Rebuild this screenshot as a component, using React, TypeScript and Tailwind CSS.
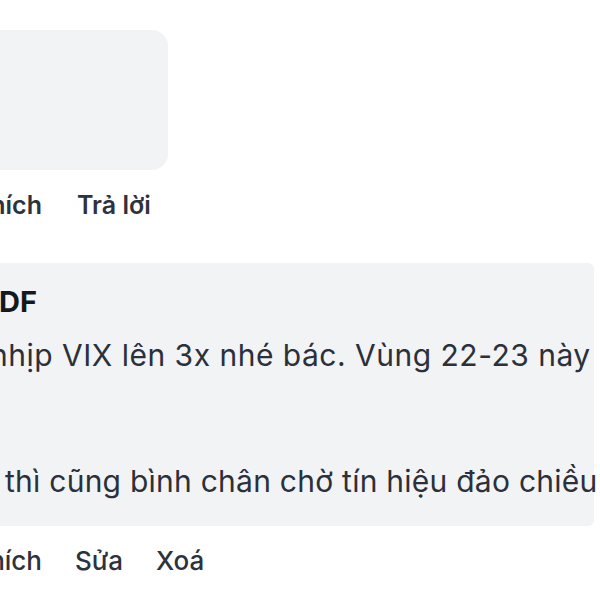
import type { ReactNode } from "react";

// Edge-clipped slot: the text is pushed against the right side so anything
// longer than the slot runs off the left of the viewport.
function Clip({ width, children }: { width: string; children: ReactNode }) {
  return (
    <span className={`flex shrink-0 justify-end whitespace-nowrap ${width}`}>
      {children}
    </span>
  );
}

export default function App() {
  return (
    <div
      className="w-[600px] h-[600px] overflow-hidden bg-white text-[#2b303a]"
      style={{ fontFamily: "Inter, 'Noto Sans', sans-serif" }}
    >
      {/* Parent comment bubble (attachment area) */}
      <div className="-ml-[40px] mt-[30px] h-[140px] w-[208px] rounded-2xl bg-[#f2f3f5]" />

      {/* Actions for the parent comment */}
      <div className="mt-[19px] flex items-center gap-[35px] text-[25px] leading-[32px] font-semibold text-[#2d323c]">
        <Clip width="w-[42px]">Thích</Clip>
        <span className="whitespace-nowrap">Trả lời</span>
      </div>

      {/* Reply bubble */}
      <div className="-ml-[40px] mt-[42px] w-[634px] rounded-md bg-[#f2f3f5] pl-[40px] pt-[21px] pb-[24px]">
        <div className="flex text-[29px] leading-[36px] font-bold text-[#15181e]">
          <Clip width="w-[37px]">DF</Clip>
        </div>
        <div className="mt-[14px] text-[30px] leading-[42px] tracking-[0.25px] whitespace-nowrap">
          <div className="-ml-[10px] tracking-[0.5px]">nhịp VIX lên 3x nhé bác. Vùng 22-23 này</div>
          <div>&nbsp;</div>
          <div>&nbsp;</div>
          <div className="ml-[5px]">thì cũng bình chân chờ tín hiệu đảo chiều</div>
        </div>
      </div>

      {/* Actions for the reply */}
      <div className="mt-[19px] flex items-center gap-[33px] text-[26px] leading-[32px] font-medium text-[#2d323c]">
        <Clip width="w-[42px]">Thích</Clip>
        <span className="whitespace-nowrap">Sửa</span>
        <span className="whitespace-nowrap">Xoá</span>
      </div>
    </div>
  );
}
